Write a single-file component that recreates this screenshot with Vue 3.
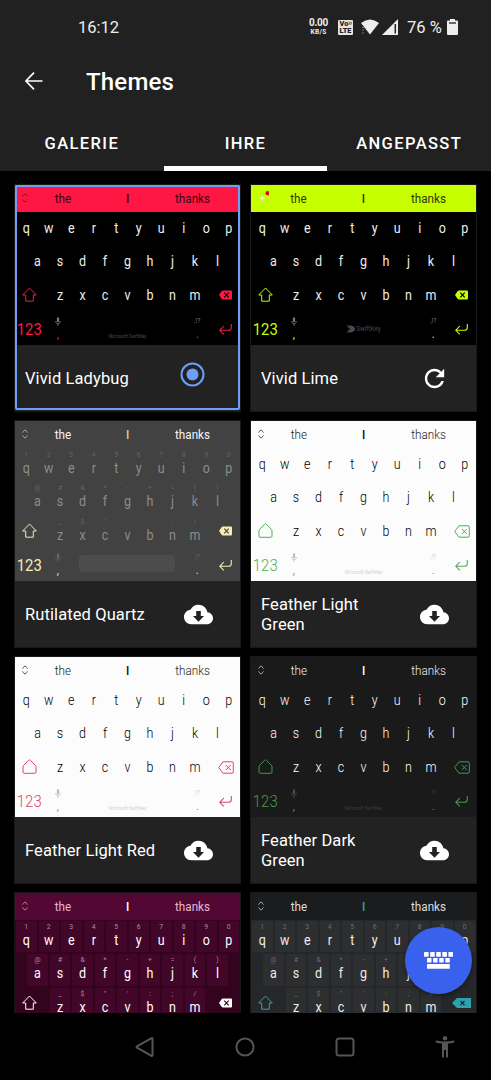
<script setup>
import { ref } from 'vue';

const tabs = ['GALERIE', 'IHRE', 'ANGEPASST'];
const activeTab = ref('IHRE');

const rows = [
    { keys: 'qwertyuiop'.split(''), hints: '1234567890'.split('') },
    { keys: 'asdfghjkl'.split(''), hints: '@#&*-+=()'.split('') },
    { keys: 'zxcvbnm'.split(''), hints: '_$"\':;/'.split('') },
];

const themes = ref([
    { name: 'Vivid Ladybug', style: 'ladybug', action: 'selected', brand: 'text' },
    { name: 'Vivid Lime', style: 'lime', action: 'refresh', brand: 'logo', notice: true },
    { name: 'Rutilated Quartz', style: 'quartz', action: 'download', hints: true },
    { name: 'Feather Light Green', style: 'feather light green', action: 'download', brand: 'text', outline: true },
    { name: 'Feather Light Red', style: 'feather light red', action: 'download', brand: 'text', outline: true },
    { name: 'Feather Dark Green', style: 'feather dark green', action: 'download', brand: 'text', outline: true },
    // The last row is only partly scrolled into view
    { style: 'burgundy keyed', hints: true, partial: true },
    { style: 'carbon keyed', hints: true, partial: true, wideDelete: true },
]);
</script>

<template>
    <div class="screen">
        <header>
            <div class="status">
                <span class="clock">16:12</span>
                <div class="speed"><b>0.00</b><small>KB/S</small></div>
                <div class="volte"><span>Vo<i>⁾⁾</i></span><span>LTE</span></div>
                <svg class="wifi" viewBox="0 0 18 16">
                    <path d="M0 4Q9-3 18 4L9 15.500z" fill="#eee" />
                    <path d="M1 8.500h2M1 11h2M1 14h2" stroke="#777" />
                </svg>
                <svg class="signal" viewBox="0 0 16 16">
                    <path d="M16 0v16H0z" fill="#eee" />
                    <path d="M13.300 5v9.500" stroke="#212121" stroke-width="1.500" />
                </svg>
                <span class="percent">76 %</span>
                <svg class="battery" viewBox="0 0 11 16">
                    <path d="M3 0h5v1.500h2q1 0 1 1V15q0 1-1 1H1q-1 0-1-1V2.500q0-1 1-1h2z" fill="#eee" />
                    <path d="M2 4h7" stroke="#212121" stroke-width="1.300" />
                </svg>
            </div>
            <div class="title">
                <svg viewBox="0 0 18 18"><path d="M17.500 9H1M9 .7L.9 9 9 17.300" /></svg>
                <h1>Themes</h1>
            </div>
            <nav class="tabs">
                <button v-for="tab in tabs" :key="tab" :class="{ active: tab === activeTab }" @click="activeTab = tab">{{ tab }}</button>
            </nav>
        </header>

        <main>
            <div v-for="theme in themes" :key="theme.style" class="card" :class="{ selected: theme.action === 'selected' }">
                <div class="keyboard" :class="[theme.style, { hinted: theme.hints, partial: theme.partial }]">
                    <div class="suggestions">
                        <svg v-if="theme.notice" class="notice" viewBox="0 0 10 12">
                            <path d="M4 5v5M1.500 7.500h5" stroke="#f4ffc0" />
                            <circle cx="8.800" cy="3" r="2" fill="#d01010" />
                        </svg>
                        <svg v-else class="expand" viewBox="0 0 6 10"><path d="M.7 3.500V3L3 .9 5.300 3v.5M.7 6.500V7L3 9.100 5.300 7v-.5" /></svg>
                        <span><em>the</em></span>
                        <span class="middle"><em>I</em></span>
                        <span><em>thanks</em></span>
                    </div>
                    <div v-for="(row, index) in rows" :key="index" class="row">
                        <div v-if="index === 2" class="side">
                            <svg v-if="theme.outline" class="shift" viewBox="0 0 15 15"><path d="M7.500.8Q8 .8 8.400 1.300L13.500 6.500Q14 7 14 8v5q0 1.300-1.300 1.300H2.300Q1 14.300 1 13V8q0-1 .5-1.500L6.600 1.300Q7 .8 7.500.8z" /></svg>
                            <svg v-else class="shift" viewBox="0 0 15 15"><path d="M7.500 1L14.300 8h-3v6.200H3.700V8h-3z" /></svg>
                        </div>
                        <div v-for="(key, i) in row.keys" :key="key" class="key">
                            <small v-if="theme.hints">{{ row.hints[i] }}</small>
                            <em>{{ key }}</em>
                        </div>
                        <div v-if="index === 2" class="side right">
                            <svg v-if="theme.outline" class="delete" viewBox="0 0 16 13"><path d="M5 .8h9q1.300 0 1.300 1.300v8.800q0 1.300-1.300 1.300H5L.7 6.500zM7.800 4l5 5M12.800 4l-5 5" /></svg>
                            <svg v-else-if="theme.wideDelete" class="delete solid wide" viewBox="0 0 19 10"><path class="body" d="M5 0h14v10H5L0 5z" /><path d="M8.500 3l4 4M12.500 3l-4 4" /></svg>
                            <svg v-else class="delete solid" viewBox="0 0 13 9"><path class="body" d="M4 0h8q1 0 1 1v7q0 1-1 1H4Q3 9 2.400 8L0 4.500 2.400 1Q3 0 4 0z" /><path d="M5.300 2.200l4.400 4.600M9.700 2.200L5.300 6.800" /></svg>
                        </div>
                    </div>
                    <div v-if="!theme.partial" class="row bottom">
                        <div class="numbers"><em>123</em></div>
                        <div class="punct">
                            <svg viewBox="0 0 6 9"><path d="M3 .5v4.500" class="mic" /><path d="M.8 4v1Q1 6.500 3 6.500T5.200 5V4M3 6.500V9" /></svg>
                            <em>,</em>
                        </div>
                        <div class="space" :class="theme.brand">
                            <small v-if="theme.brand === 'text'">Microsoft SwiftKey</small>
                            <template v-if="theme.brand === 'logo'">
                                <svg viewBox="0 0 10 8"><path d="M0 0h5q5 1 5 4T5 8H0l4-2H1l4-2-4-2h3z" /></svg>
                                <small>SwiftKey</small>
                            </template>
                        </div>
                        <div class="punct">
                            <small>,!?</small>
                            <em>.</em>
                        </div>
                        <div class="enter"><svg viewBox="0 0 13 12"><path d="M12.300 1v3.500q0 2.800-2.800 2.800H1M4.800 3L.8 7.300l4 4" /></svg></div>
                    </div>
                </div>
                <div v-if="!theme.partial" class="info">
                    <h2>{{ theme.name }}</h2>
                    <svg v-if="theme.action === 'selected'" class="radio" viewBox="0 0 25 25">
                        <circle cx="12.500" cy="12.500" r="11" />
                        <circle cx="12.500" cy="12.500" r="6" class="dot" />
                    </svg>
                    <svg v-else-if="theme.action === 'refresh'" viewBox="0 0 24 24"><path d="M17.650 6.350C16.200 4.900 14.210 4 12 4c-4.420 0-7.990 3.580-7.990 8s3.570 8 7.990 8c3.730 0 6.840-2.550 7.730-6h-2.080c-.82 2.330-3.040 4-5.650 4-3.310 0-6-2.690-6-6s2.690-6 6-6c1.660 0 3.140.69 4.220 1.780L13 11h7V4l-2.350 2.350z" /></svg>
                    <svg v-else viewBox="0 0 24 24"><path d="M19.350 10.040C18.670 6.590 15.640 4 12 4 9.110 4 6.600 5.640 5.350 8.040 2.340 8.360 0 10.910 0 14c0 3.310 2.690 6 6 6h13c2.760 0 5-2.240 5-5 0-2.640-2.050-4.780-4.650-4.960zM16.600 13.200L12 17.900l-4.600-4.700h2.700V9h3.800v4.200h2.700z" /></svg>
                </div>
            </div>
        </main>

        <button class="fab" aria-label="Tastatur">
            <svg viewBox="0 0 29 17">
                <rect v-for="n in 5" :key="n" :x="(n - 1) * 6.1" y="0" width="4.600" height="4.800" rx=".6" />
                <rect v-for="n in 4" :key="n + 5" :x="3 + (n - 1) * 6.1" y="6" width="4.500" height="4.600" rx=".6" />
                <rect x="3" y="12" width="22.800" height="4.800" rx=".6" />
            </svg>
        </button>

        <footer>
            <svg viewBox="0 0 20 20"><path d="M17.500 1.700v16.600q0 1-1 .5L2 10.700q-1-.7 0-1.400l14.500-8.100q1-.5 1 .5z" /></svg>
            <svg viewBox="0 0 20 20"><circle cx="10" cy="10" r="8.600" /></svg>
            <svg viewBox="0 0 20 20"><rect x="1.500" y="1.500" width="17" height="17" rx="2.500" /></svg>
            <svg class="person" viewBox="0 0 20 22"><circle cx="10" cy="2.300" r="2.200" /><path d="M.7 4.600Q10 6.500 19.300 4.600v2Q16 7.400 13 7.600V21.500h-2V14H9v7.500H7V7.600Q4 7.400.7 6.600z" /></svg>
        </footer>
    </div>
</template>

<style>
body {
    background: #000;
}
</style>

<style scoped>
.screen {
    display: flex;
    flex-direction: column;
    width: 491px;
    height: 1080px;
    overflow: hidden;
    background: #000;
    color: #fff;
    font-family: Roboto, "Liberation Sans", sans-serif;
}

svg {
    display: block;
    flex: none;
}

em {
    font-style: normal;
    display: block;
}

button {
    border: none;
    padding: 0;
    font-family: inherit;
    color: #fff;
}

/* Header */
header {
    height: 171px;
    flex: none;
    background: #212121;
}

.status {
    display: flex;
    align-items: center;
    height: 54px;
    padding-left: 78px;
    color: #eee;
}

.clock {
    width: 231px;
    font-size: 16.5px;
}

.speed {
    display: flex;
    flex-direction: column;
    align-items: center;
    width: 19px;
    line-height: 1;
}

.speed b {
    font-size: 10px;
    line-height: 10px;
    letter-spacing: -0.3px;
}

.speed small {
    font-size: 6.5px;
    line-height: 8px;
    font-weight: 700;
    letter-spacing: 0.3px;
}

.volte {
    display: flex;
    flex-direction: column;
    align-items: center;
    justify-content: center;
    width: 15px;
    height: 15px;
    margin-left: 10px;
    border-radius: 1px;
    background: #e4e4e4;
    color: #212121;
    font-size: 7.3px;
    line-height: 7px;
    font-weight: 900;
}

.volte i {
    font-size: 6px;
}

.wifi {
    width: 18px;
    height: 16px;
    margin-left: 8px;
}

.signal {
    width: 16px;
    height: 16px;
    margin-left: 3px;
}

.percent {
    width: 40px;
    margin-left: 9px;
    font-size: 16.5px;
}

.battery {
    width: 11px;
    height: 16px;
}

.title {
    display: flex;
    align-items: center;
    height: 54px;
    padding-left: 25px;
}

.title svg {
    width: 18px;
    height: 18px;
    fill: none;
    stroke: #fff;
    stroke-width: 1.7;
}

h1 {
    margin: 1px 0 0 43px;
    font-size: 24px;
    font-weight: 500;
    letter-spacing: 0.2px;
}

.tabs {
    display: flex;
    height: 63px;
}

.tabs button {
    flex: 1;
    padding-top: 13px;
    background: none;
    border-bottom: 5px solid transparent;
    font-size: 16.5px;
    font-weight: 500;
    letter-spacing: 1.4px;
}

.tabs .active {
    border-color: #fff;
}

/* Theme list */
main {
    display: grid;
    grid-template-columns: 225px 225px;
    grid-auto-rows: 226px;
    gap: 10px 11px;
    height: 842px;
    box-sizing: border-box;
    flex: none;
    padding: 14px 15px 0;
    overflow: hidden;
}

.card {
    background: #222;
    box-shadow: 0 0 0 1px #181818;
}

.selected {
    position: relative;
}

.selected::after {
    content: "";
    position: absolute;
    inset: 0 0 1px;
    border: 2px solid #6f9ff5;
    border-radius: 2px;
}

.info {
    display: flex;
    align-items: center;
    justify-content: space-between;
    height: 66px;
    padding: 0 27px 0 10px;
}

h2 {
    width: 140px;
    margin: 1px 0 0;
    font-size: 16.5px;
    line-height: 19.5px;
    font-weight: 400;
    letter-spacing: 0.1px;
}

.info svg {
    width: 29px;
    height: 29px;
    fill: #fff;
}

.info .radio {
    width: 25px;
    height: 25px;
    margin: 0 8px 8px 0;
    fill: none;
    stroke: #6f9ff5;
    stroke-width: 2;
}

.radio .dot {
    fill: #6f9ff5;
    stroke: none;
}

/* Keyboard preview */
.keyboard {
    --bar: #000;
    --board: #000;
    --word: #eee;
    --middle: var(--word);
    --key: #eee;
    --hint: #777;
    --accent: #fff;
    --brand: #4a4a4a;
    --expand: #aaa;
    height: 160px;
    background: var(--board);
    color: var(--key);
}

.keyboard.partial {
    height: 128px;
}

.keyboard em,
.keyboard small {
    transform: scaleY(1.15);
}

.suggestions {
    display: flex;
    align-items: center;
    height: 26.5px;
    padding-right: 15px;
    background: var(--bar);
    color: var(--word);
    font-size: 11.7px;
}

.suggestions span {
    flex: 1;
    text-align: center;
}

.suggestions .middle {
    color: var(--middle);
    font-weight: 500;
}

.expand {
    width: 6px;
    height: 10px;
    margin: 0 2.5px 0 7px;
    fill: none;
    stroke: var(--expand);
}

.notice {
    width: 11px;
    height: 13px;
    margin: 0 -3px 3px 7px;
    fill: none;
}

.row {
    display: flex;
    justify-content: center;
    height: 33.6px;
}

.row.bottom {
    height: 32.7px;
}

.key {
    display: flex;
    flex-direction: column;
    align-items: center;
    justify-content: center;
    width: 22.5px;
    padding-bottom: 2px;
    box-sizing: border-box;
    font-size: 12.5px;
    line-height: 15px;
}

.hinted .key {
    justify-content: flex-start;
    padding: 3px 0 0;
}

.key small {
    height: 9px;
    font-size: 6.8px;
    line-height: 9px;
    color: var(--hint);
}

.side {
    display: flex;
    align-items: center;
    justify-content: center;
    width: 33.75px;
    padding: 0 5px 2px 0;
    box-sizing: border-box;
}

.side.right {
    padding: 0 0 0 5px;
}

.shift,
.delete {
    fill: none;
    stroke: var(--accent);
}

.shift {
    width: 15px;
    height: 15px;
}

.delete {
    width: 16px;
    height: 13px;
}

.delete.solid {
    width: 13px;
    height: 10px;
    stroke: var(--board);
    stroke-width: 1.2;
}

.delete.wide {
    width: 19px;
    height: 10px;
}

.delete .body {
    fill: var(--accent);
    stroke: none;
}

.numbers,
.enter {
    display: flex;
    align-items: center;
    justify-content: center;
    width: 31.5px;
    box-sizing: border-box;
    color: var(--accent);
}

.numbers {
    padding-right: 3px;
    font-size: 14.9px;
}

.enter {
    padding-left: 2px;
}

.enter svg {
    width: 13px;
    height: 12px;
    fill: none;
    stroke: var(--accent);
    stroke-width: 1.1;
}

.punct {
    display: flex;
    flex-direction: column;
    align-items: center;
    width: 22.5px;
    padding-top: 5px;
    box-sizing: border-box;
    color: var(--punct, var(--accent));
}

.punct svg {
    width: 6px;
    height: 9px;
    fill: none;
    stroke: var(--hint);
    stroke-width: 0.8;
}

.punct .mic {
    stroke-width: 2.2;
}

.punct small {
    height: 9px;
    font-size: 6.5px;
    line-height: 9px;
    color: var(--hint);
}

.punct em {
    margin-top: 2px;
    font-size: 11px;
    line-height: 14px;
}

.space {
    display: flex;
    align-items: center;
    justify-content: center;
    flex: 1;
    gap: 1px;
    color: var(--brand);
}

.space.text {
    padding-top: 15px;
}

.space small {
    font-size: 4.5px;
    white-space: nowrap;
}

.space.logo small {
    font-size: 6.3px;
}

.space svg {
    width: 9px;
    height: 8px;
    fill: var(--brand);
}

/* Colour schemes */
.ladybug {
    --bar: #ff1744;
    --word: #3d0510;
    --accent: #ff1744;
    --expand: #8c1028;
}

.lime {
    --bar: #c6ff00;
    --word: #2c3a00;
    --accent: #c6ff00;
}

.quartz {
    --bar: #424242;
    --board: #424242;
    --word: #f5f5f5;
    --middle: #d6cd98;
    --key: #8c8c8c;
    --hint: #646464;
    --accent: #f5edb0;
    --punct: #ddd;
}

.quartz .space::before {
    content: "";
    width: 96px;
    height: 17px;
    margin: 0 1px 2px 0;
    border-radius: 4px;
    background: #4c4c4c;
}

.feather {
    --bar: var(--board);
    font-weight: 300;
}

.light {
    --board: #fcfcfc;
    --word: #222;
    --middle: #111;
    --key: #000;
    --hint: #bbb;
    --brand: #bbb;
    --punct: #555;
    --expand: #555;
}

.dark {
    --board: #1a1a1a;
    --word: #eee;
    --middle: #fff;
    --key: #fff;
    --hint: #4c4c4c;
    --punct: #aaa;
}

.green {
    --accent: #4caf50;
}

.dark.green {
    --accent: #439c49;
}

.red {
    --accent: #e0456a;
}

.keyed .key {
    border: 1px solid var(--board);
    border-radius: 3px;
    padding-top: 2px;
    background: var(--cap);
}

.burgundy {
    --bar: #520832;
    --board: #34031e;
    --cap: #420628;
    --word: #e3b9d2;
    --middle: #fff;
    --key: #fff;
    --hint: #b08ba0;
    --expand: #b58aa2;
}

.carbon {
    --bar: #1b1c1e;
    --board: #25272a;
    --cap: #2c2e30;
    --word: #ddd;
    --middle: #2ba3ad;
    --key: #eee;
    --hint: #6b6d6f;
    --accent: #2ba3ad;
}

/* Floating button over the list */
.fab {
    position: absolute;
    left: 405px;
    top: 927px;
    display: flex;
    align-items: center;
    justify-content: center;
    width: 67px;
    height: 67px;
    border-radius: 50%;
    background: #3a60ee;
    box-shadow: 0 2px 4px rgba(0, 0, 0, 0.4);
}

.fab svg {
    width: 29px;
    height: 17px;
    fill: #fff;
}

/* System navigation */
footer {
    display: flex;
    align-items: center;
    justify-content: space-between;
    padding: 23px 36px 0 135px;
}

footer svg {
    width: 20px;
    height: 20px;
    fill: none;
    stroke: #555;
    stroke-width: 2;
}

footer .person {
    height: 22px;
    fill: #555;
    stroke: none;
}
</style>
